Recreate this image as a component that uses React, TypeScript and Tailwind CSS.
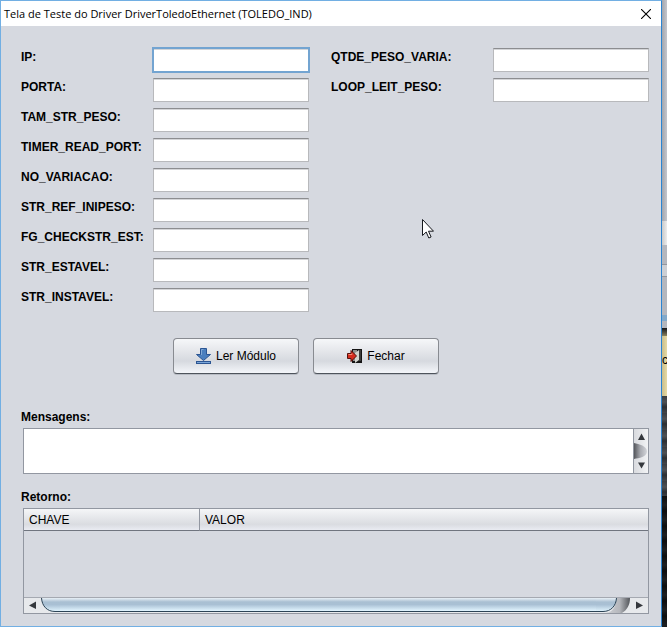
import React from "react";

const leftFields = [
  "IP:",
  "PORTA:",
  "TAM_STR_PESO:",
  "TIMER_READ_PORT:",
  "NO_VARIACAO:",
  "STR_REF_INIPESO:",
  "FG_CHECKSTR_EST:",
  "STR_ESTAVEL:",
  "STR_INSTAVEL:",
];
const rightFields = ["QTDE_PESO_VARIA:", "LOOP_LEIT_PESO:"];

function Field({ label, focused = false }: { label: string; focused?: boolean }) {
  const id = label.replace(":", "").toLowerCase();
  return (
    <div className="flex h-6 items-center">
      <label htmlFor={id} className="min-w-0 flex-1 pb-1.5 text-[12px] leading-4 font-bold whitespace-nowrap">
        {label}
      </label>
      <input
        id={id}
        type="text"
        className={
          "h-6 w-[156px] shrink-0 border border-[#b8b9bc] border-t-[#8c8d90] bg-white px-1 text-[12px] shadow-[inset_0_1px_0_#d4d5d8] outline-[#73a4d1] " +
          (focused ? "-outline-offset-1 outline-2" : "outline-0 focus:outline-2")
        }
      />
    </div>
  );
}

function DownloadIcon() {
  return (
    <svg width="16" height="16" viewBox="0 0 16 16" aria-hidden="true">
      <path d="M4.500 .5h6v6h4L7.500 12.500 .5 6.500h4z" fill="#4b7fbe" stroke="#2b5593" />
      <path d="M5.500 7V1.500h2" fill="none" stroke="#82a9d6" />
      <rect x=".5" y="13.500" width="14" height="2" fill="#79a5d8" stroke="#2b5593" />
    </svg>
  );
}

function ExitIcon() {
  return (
    <svg width="16" height="16" viewBox="0 0 16 16" aria-hidden="true">
      <path d="M5 1h10v14H5z" fill="#141414" />
      <path d="M6 2h4v11H6z" fill="#8f8f8b" />
      <path d="M8 5l4-3v10l-4 3z" fill="#d3d4ce" />
      <path d="M12 2h2v11h-2z" fill="#3b3b3a" />
      <path d="M.5 5.500H4v-3L9.500 8 4 13.500v-3H.5z" fill="#d52c1d" stroke="#54110d" />
      <path d="M1.500 6.500H5v-1" fill="none" stroke="#f28a70" />
    </svg>
  );
}

function ActionButton({ icon, children }: { icon: React.ReactNode; children: React.ReactNode }) {
  return (
    <button
      type="button"
      className="flex h-9 w-[126px] items-center justify-center gap-1 rounded-[4px] border border-[#888b91] border-b-[#4e545c] bg-linear-to-b from-[#f6f7f9] via-[#d6d9df] via-65% to-[#f4f6fa] text-[12px] leading-4 shadow-[0_1px_0_#b8bcc4]"
    >
      {icon}
      {children}
    </button>
  );
}

export default function App() {
  return (
    <div className="flex h-screen w-full bg-[#d6d9e0] font-['Liberation_Sans',Arial,sans-serif] text-black">
      <main className="flex min-w-0 flex-1 flex-col border border-[#72afe3] border-r-[#2a84d2] bg-[#d6d9e0]">
        <header className="flex h-[25px] shrink-0 items-center justify-between bg-white pr-2.5 pl-[3px]">
          <h1 className="font-['Open_Sans','Noto_Sans',sans-serif] text-[11px] leading-4 font-normal whitespace-nowrap">
            Tela de Teste do Driver DriverToledoEthernet (TOLEDO_IND)
          </h1>
          <button type="button" aria-label="Fechar janela">
            <svg width="10" height="10" viewBox="0 0 10 10" aria-hidden="true">
              <path d="M0 0l10 10M10 0L0 10" stroke="#000" strokeWidth="1.1" />
            </svg>
          </button>
        </header>

        <div className="flex flex-1 flex-col pr-3 pl-5">
          <section className="flex justify-between pt-[22px]">
            <div className="flex w-[288px] flex-col gap-1.5">
              {leftFields.map((f, i) => (
                <Field key={f} label={f} focused={i === 0} />
              ))}
            </div>
            <div className="flex w-[318px] flex-col gap-1.5">
              {rightFields.map((f) => (
                <Field key={f} label={f} />
              ))}
            </div>
          </section>

          <div className="flex gap-3.5 pt-[26px] pl-[152px]">
            <ActionButton icon={<DownloadIcon />}>Ler Módulo</ActionButton>
            <ActionButton icon={<ExitIcon />}>Fechar</ActionButton>
          </div>

          <label htmlFor="mensagens" className="mt-[35px] text-[12px] leading-4 font-bold">
            Mensagens:
          </label>
          <div className="mt-[3px] ml-0.5 flex h-[46px] border border-[#9297a1] bg-white">
            <textarea id="mensagens" className="min-w-0 flex-1 resize-none p-1 text-[12px] outline-none" />
            <div className="w-[15px] shrink-0 border-l border-[#9297a1]">
              <svg width="14" height="44" viewBox="0 0 14 44" aria-hidden="true">
                <defs>
                  <linearGradient id="vtrack">
                    <stop offset="0" stopColor="#d9dbdf" />
                    <stop offset="1" stopColor="#f2f3f5" />
                  </linearGradient>
                  <linearGradient id="vcap">
                    <stop offset="0" stopColor="#55575c" />
                    <stop offset=".5" stopColor="#a9abb1" />
                    <stop offset="1" stopColor="#d3d5da" />
                  </linearGradient>
                </defs>
                <path d="M0 0h14v44H0z" fill="url(#vtrack)" />
                <path d="M0 14c5 1 13 3 13 8.500S5 29 0 30z" fill="url(#vcap)" />
                <path d="M7.500 4.500l3.500 6.500H4zM7.500 39.500L4 33.500h7z" fill="#35383d" />
              </svg>
            </div>
          </div>

          <h2 id="retorno" className="mt-[15px] text-[12px] leading-4 font-bold">
            Retorno:
          </h2>
          <div className="mt-[3px] ml-0.5 flex h-[106px] flex-col border border-[#9297a1]">
            <table
              aria-labelledby="retorno"
              className="w-full table-fixed border-separate border-spacing-0 text-left text-[12px] leading-4"
            >
              <thead>
                <tr className="h-[22px] bg-linear-to-b from-[#f5f6f8] via-[#dadce1] via-70% to-[#eceef5]">
                  <th className="w-[176px] border-r border-b border-r-[#9297a1] border-b-[#70757f] p-0 pl-[5px] font-normal">
                    CHAVE
                  </th>
                  <th className="border-b border-[#70757f] p-0 pl-[5px] font-normal">VALOR</th>
                </tr>
              </thead>
              <tbody />
            </table>
            <div className="mt-auto flex h-4 border-t border-[#a5a9b1] bg-[#e7e9ec]">
              <svg width="36" height="15" viewBox="0 0 36 15" className="shrink-0" aria-hidden="true">
                <defs>
                  <linearGradient id="hthumb" x2="0" y2="1">
                    <stop offset="0" stopColor="#e8f0f6" />
                    <stop offset=".3" stopColor="#a9bfd2" />
                    <stop offset=".5" stopColor="#a9c0d4" />
                    <stop offset="1" stopColor="#e2f5ff" />
                  </linearGradient>
                </defs>
                <path d="M5 7.500l7-4v7.500z" fill="#35383d" />
                <path d="M17.500 0C18 8 23 13.500 31 13.500h5V0z" fill="url(#hthumb)" />
                <path d="M17.500 0C18 8 23 13.500 31 13.500h5" fill="none" stroke="#2b4355" />
              </svg>
              <div className="mb-px min-w-0 flex-1 border-b border-[#2b4355] bg-[linear-gradient(#e8f0f6,#a9bfd2_30%,#a9c0d4_50%,#e2f5ff)]" />
              <svg width="52" height="15" viewBox="0 0 52 15" className="shrink-0" aria-hidden="true">
                <defs>
                  <linearGradient id="hcap">
                    <stop offset="0" stopColor="#d1d3d8" />
                    <stop offset=".6" stopColor="#b5b7bc" />
                    <stop offset="1" stopColor="#53565b" />
                  </linearGradient>
                </defs>
                <path d="M8 15C19 15 20 6 20 0h14c0 7-3 12-8 15z" fill="url(#hcap)" />
                <path d="M0 0h21C20 8 15 13.500 7 13.500H0z" fill="url(#hthumb)" />
                <path d="M20.500 0C20 8 15 13.500 7 13.500H0" fill="none" stroke="#2b4355" />
                <path d="M47 7.500l-7-4v7.500z" fill="#35383d" />
              </svg>
            </div>
          </div>
        </div>
      </main>

      <aside aria-hidden="true" className="flex w-[5px] shrink-0 flex-col overflow-hidden bg-[#aeb1b8]">
        <div className="h-[221px] shrink-0 bg-linear-to-r from-[#a3a6ad] to-[#c3c6cd]" />
        <div className="h-6 shrink-0 bg-linear-to-r from-[#c9c9c9] to-[#ececec]" />
        <div className="h-5 shrink-0 border-b border-[#93969d] bg-[#b4b7be]" />
        <div className="h-3 shrink-0 border-b border-[#93969d] bg-[#cccfd4]" />
        <div className="h-[38px] shrink-0 bg-[#b4b7be]" />
        <div className="h-[6px] shrink-0 bg-[#83a9c9]" />
        <div className="h-[7px] shrink-0 bg-[#b4b7be]" />
        <div className="h-[8px] shrink-0 bg-linear-to-b from-[#15171a] to-[#8c845f]" />
        <div className="flex h-[60px] shrink-0 items-center bg-linear-to-r from-[#c9bd8c] to-[#e6daa4] pb-3 text-[12px] leading-4">
          c
        </div>
        <div className="h-[100px] shrink-0 bg-[repeating-linear-gradient(#3a3d41,#4e5155_6px,#2c2f33_11px,#44474b_17px)]" />
        <div className="flex-1 bg-[repeating-linear-gradient(#0d0e0f,#1e2022_9px,#0d0e0f_15px)]" />
      </aside>

      <svg className="absolute top-[219px] left-[422px]" width="12" height="20" viewBox="0 0 12 20" aria-hidden="true">
        <path d="M.5 .5v16l3.700-3.500 2.600 6 2.300-1-2.600-5.800h5z" fill="#fff" stroke="#17191e" />
      </svg>
    </div>
  );
}
